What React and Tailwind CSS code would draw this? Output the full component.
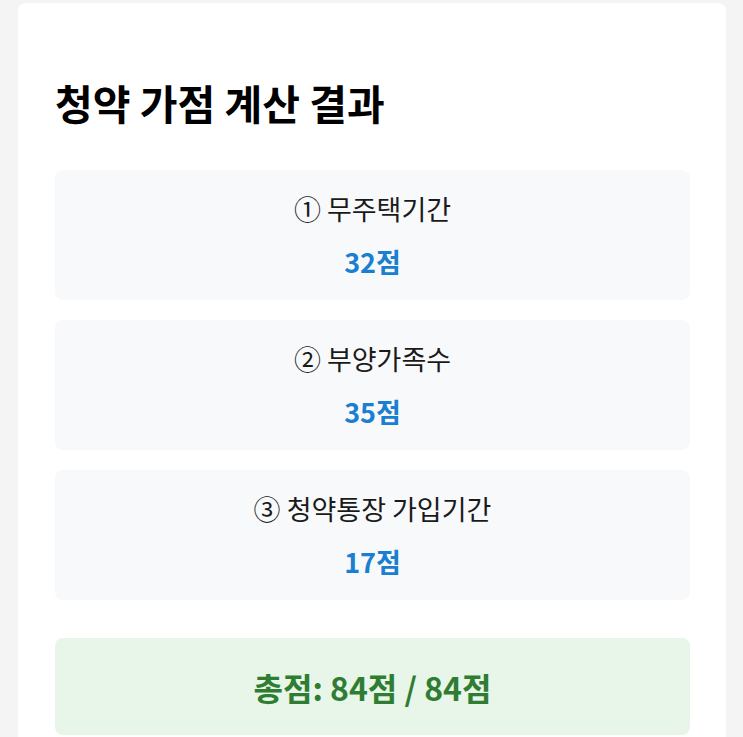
import React from 'react';

const ITEMS = [
  { label: '① 무주택기간', score: 32 },
  { label: '② 부양가족수', score: 35 },
  { label: '③ 청약통장 가입기간', score: 17 },
];

export default function App() {
  return (
    <div className="h-screen overflow-hidden bg-[#f4f4f4] pl-[18px] pr-[17px] pt-[3px] font-['Noto_Sans_CJK_KR','Noto_Sans',sans-serif]">
      <div className="bg-white rounded-t-lg pl-[37px] pr-[36px] pt-[73px] h-full">
        <h1 className="text-[41px] font-bold text-black leading-[53px]">청약 가점 계산 결과</h1>

        <div className="mt-[41px] flex flex-col gap-5">
          {ITEMS.map(it => (
            <div key={it.label} className="bg-[#f8f9fa] rounded-lg h-[130px] flex flex-col items-center justify-center">
              <p className="text-[27px] text-[#1a1a1a] leading-[36px]">{it.label}</p>
              <p className="mt-[17px] text-[27px] font-bold text-[#1a7fd0] leading-[36px]">{it.score}점</p>
            </div>
          ))}
        </div>

        <div className="mt-[38px] bg-[#e8f5e9] rounded-lg h-[97px] flex items-center justify-center">
          <p className="text-[32px] font-bold text-[#2e7d32]">총점: 84점 / 84점</p>
        </div>
      </div>
    </div>
  );
}
